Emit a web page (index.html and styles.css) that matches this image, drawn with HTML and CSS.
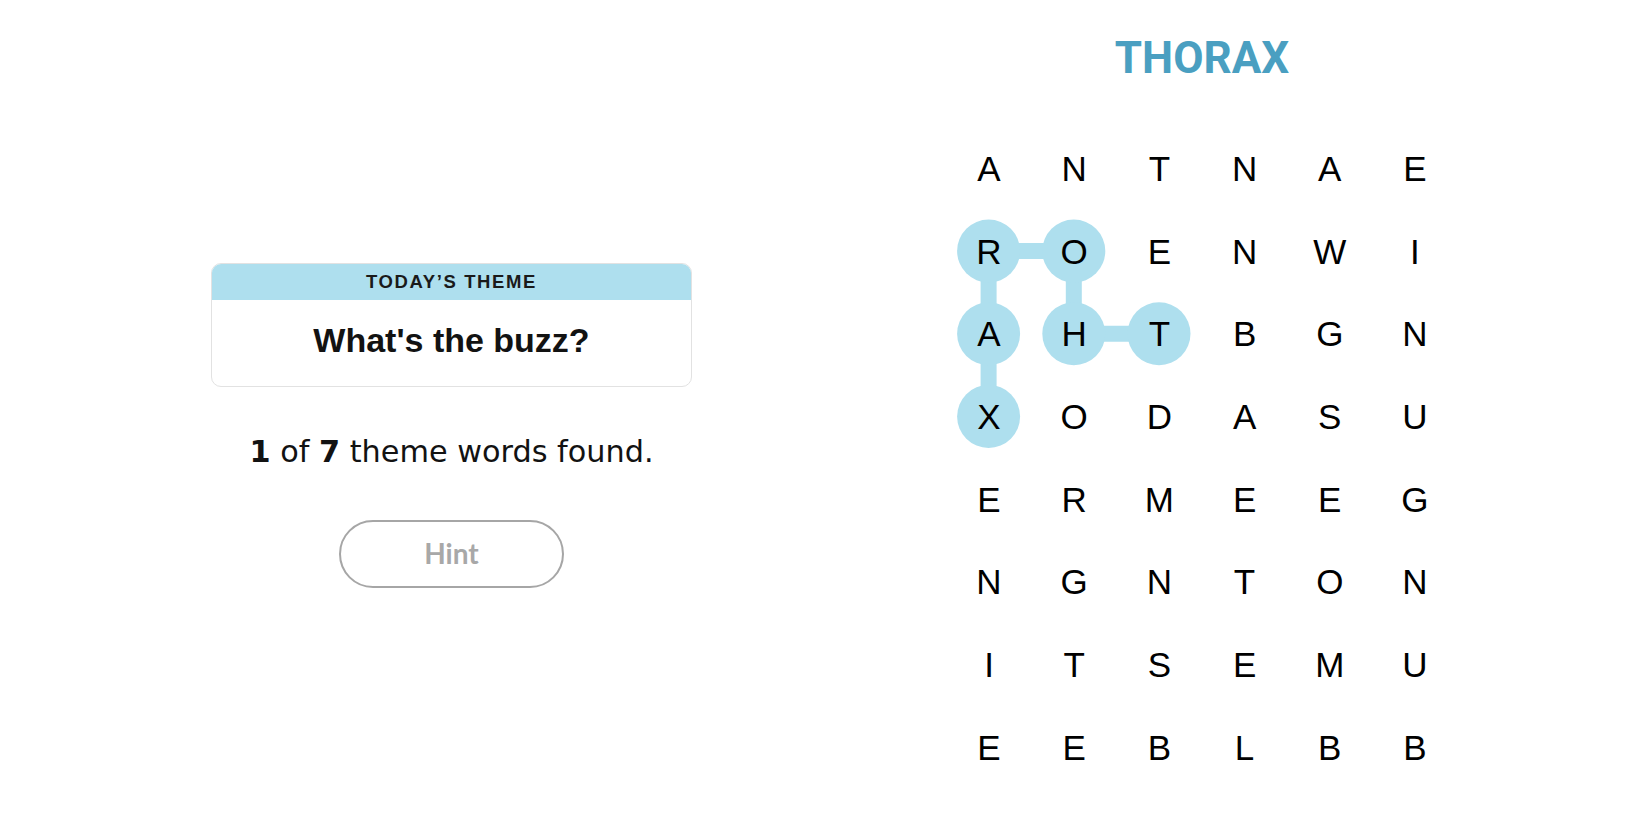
FILE: index.html
```html
<!DOCTYPE html>
<html lang="en">
<head>
<meta charset="utf-8">
<title>Strands</title>
<link rel="stylesheet" href="styles.css">
</head>
<body>
<main class="game">
  <section class="info">
    <div class="theme-card">
      <div class="theme-label">TODAY’S THEME</div>
      <div class="theme-clue">What's the buzz?</div>
    </div>
    <p class="progress"><b>1</b> of <b>7</b> theme words found.</p>
    <button class="hint" type="button">Hint</button>
  </section>
  <section class="board">
    <h1 class="current-word">THORAX</h1>
    <div class="grid-wrap">
      <svg class="path" width="511.2" height="661.6" viewBox="0 0 511.2 661.6" aria-hidden="true">
        <g stroke="#aedfee" stroke-width="16" stroke-linecap="butt">
          <line x1="213" y1="206.75" x2="127.8" y2="206.75"/>
          <line x1="127.8" y1="206.75" x2="127.8" y2="124.05"/>
          <line x1="127.8" y1="124.05" x2="42.6" y2="124.05"/>
          <line x1="42.6" y1="124.05" x2="42.6" y2="206.75"/>
          <line x1="42.6" y1="206.75" x2="42.6" y2="289.45"/>
        </g>
        <g fill="#aedfee">
          <circle cx="42.6" cy="124.05" r="31.5"/>
          <circle cx="127.8" cy="124.05" r="31.5"/>
          <circle cx="42.6" cy="206.75" r="31.5"/>
          <circle cx="127.8" cy="206.75" r="31.5"/>
          <circle cx="213" cy="206.75" r="31.5"/>
          <circle cx="42.6" cy="289.45" r="31.5"/>
        </g>
      </svg>
      <div class="grid">
        <span>A</span><span>N</span><span>T</span><span>N</span><span>A</span><span>E</span>
        <span>R</span><span>O</span><span>E</span><span>N</span><span>W</span><span>I</span>
        <span>A</span><span>H</span><span>T</span><span>B</span><span>G</span><span>N</span>
        <span>X</span><span>O</span><span>D</span><span>A</span><span>S</span><span>U</span>
        <span>E</span><span>R</span><span>M</span><span>E</span><span>E</span><span>G</span>
        <span>N</span><span>G</span><span>N</span><span>T</span><span>O</span><span>N</span>
        <span>I</span><span>T</span><span>S</span><span>E</span><span>M</span><span>U</span>
        <span>E</span><span>E</span><span>B</span><span>L</span><span>B</span><span>B</span>
      </div>
    </div>
  </section>
</main>
</body>
</html>
```

FILE: styles.css
```css
* {
  box-sizing: border-box;
}

html, body {
  margin: 0;
  padding: 0;
  background: #ffffff;
  color: #121212;
  font-family: "Liberation Sans", Arial, sans-serif;
}

.game {
  display: flex;
  align-items: flex-start;
  width: 1650px;
  height: 825px;
  overflow: hidden;
}

.info {
  width: 903px;
  display: flex;
  flex-direction: column;
  align-items: center;
  padding-top: 263px;
}

.theme-card {
  width: 481px;
  border: 1px solid #e2e2e2;
  border-radius: 10px;
  overflow: hidden;
  background: #fff;
}

.theme-label {
  height: 37px;
  margin: -1px -1px 0;
  background: #aedfee;
  display: flex;
  align-items: center;
  justify-content: center;
  font-size: 18.5px;
  font-weight: 700;
  letter-spacing: 1.6px;
  color: #1a1a1a;
  padding-top: 1px;
}

.theme-clue {
  height: 86px;
  display: flex;
  align-items: center;
  justify-content: center;
  padding-bottom: 6px;
  font-size: 34px;
  font-weight: 700;
  color: #121212;
}

.progress {
  margin: 45px 0 0;
  height: 40px;
  line-height: 40px;
  font-family: "DejaVu Sans", "Liberation Sans", sans-serif;
  font-size: 30.3px;
  color: #121212;
}

.progress b {
  font-weight: 700;
}

.hint {
  margin-top: 48px;
  width: 225px;
  height: 68px;
  border: 2px solid #a6a6a6;
  border-radius: 34px;
  background: #ffffff;
  color: #a8a8a8;
  font-family: Lato, "Liberation Sans", sans-serif;
  font-weight: 700;
  font-size: 28px;
  padding: 0 0 2px;
  cursor: default;
}

.board {
  width: 598px;
  display: flex;
  flex-direction: column;
  align-items: center;
}

.current-word {
  margin: 33px 0 0;
  height: 50px;
  line-height: 50px;
  font-family: Roboto, "Liberation Sans", sans-serif;
  font-weight: 700;
  font-size: 44px;
  color: #4a9fc1;
}

.grid-wrap {
  position: relative;
  margin-top: 44px;
  width: 511.2px;
  height: 661.6px;
}

.path {
  position: absolute;
  left: 0;
  top: 0;
}

.grid {
  position: relative;
  display: grid;
  grid-template-columns: repeat(6, 85.2px);
  grid-template-rows: repeat(8, 82.7px);
}

.grid span {
  display: flex;
  align-items: center;
  justify-content: center;
  font-size: 35px;
  line-height: 1;
  color: #000;
}
```
